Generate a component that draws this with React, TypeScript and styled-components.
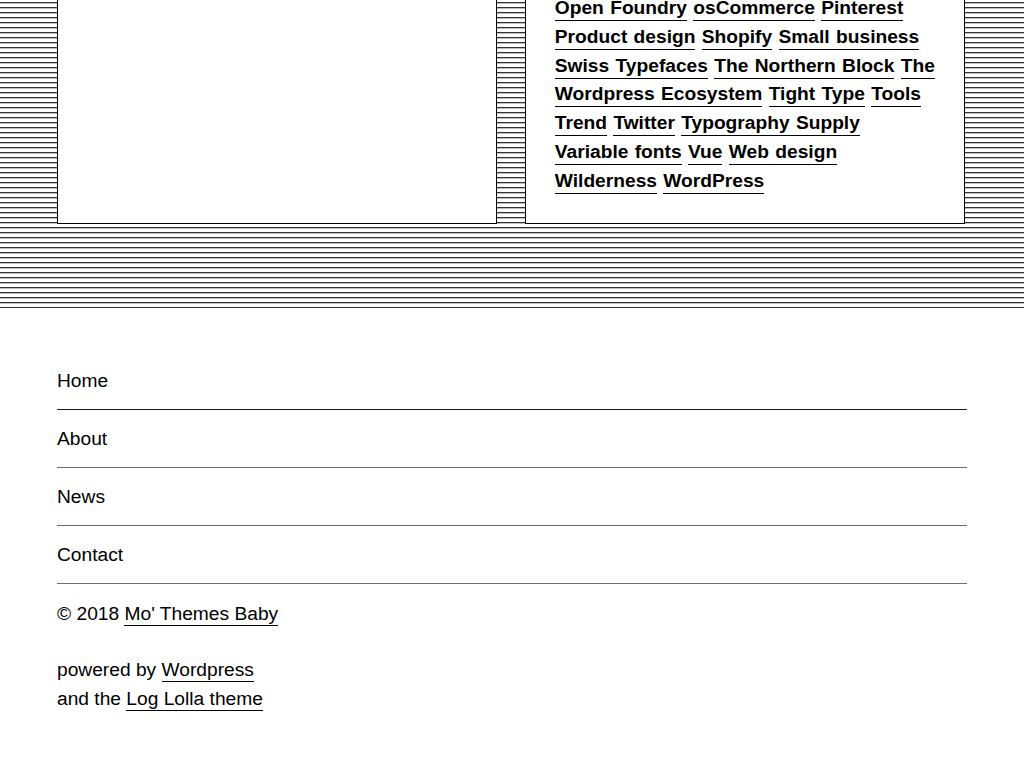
import React from "react";
import styled, { createGlobalStyle } from "styled-components";

const Global = createGlobalStyle`
  html, body { margin: 0; padding: 0; background: #fff; }
  body {
    font-family: "Liberation Sans", Arial, Helvetica, sans-serif;
    font-size: 19.2px;
    line-height: 1.5;
    color: #000;
  }
  * { box-sizing: border-box; }
`;

const Striped = styled.section`
  background: repeating-linear-gradient(
    to bottom,
    #fff 0px,
    #fff 2px,
    #333 2px,
    #333 3px,
    #bcbcbc 3px,
    #bcbcbc 4px,
    #fff 4px,
    #fff 5px
  );
  padding-bottom: 84px;
`;

const Grid = styled.div`
  width: 910px;
  margin: 0 auto;
  display: grid;
  grid-template-columns: 440px 440px;
  column-gap: 28px;
`;

const Card = styled.div`
  background: #fff;
  border: 1px solid #000;
  border-top: none;
  padding: 0 28.8px 27px;
  min-height: 100px;
`;

const TagCloud = styled.div`
  margin-top: -6px;
  font-weight: 700;
  word-spacing: 1px;
`;

const Tag = styled.a`
  color: #000;
  text-decoration: none;
  padding-bottom: 2px;
  border-bottom: 1px solid #000;
`;

const Footer = styled.footer`
  width: 910px;
  margin: 0 auto;
  padding: 45px 0 40px;
`;

const NavList = styled.ul`
  list-style: none;
  margin: 0;
  padding: 0;
`;

const NavItem = styled.li<{ $first?: boolean }>`
  padding: 14.6px 0 13.4px;
  border-bottom: 1px solid ${(p) => (p.$first ? "#1a1a1a" : "#6e6e6e")};
`;

const NavLink = styled.a`
  color: #000;
  text-decoration: none;
`;

const Line = styled.p<{ $top?: number }>`
  margin: ${(p) => p.$top ?? 0}px 0 0;
`;

const FootLink = styled.a`
  color: #000;
  text-decoration: none;
  padding-bottom: 1px;
  border-bottom: 1px solid #000;
`;

const tags = [
  "Open Foundry",
  "osCommerce",
  "Pinterest",
  "Product design",
  "Shopify",
  "Small business",
  "Swiss Typefaces",
  "The Northern Block",
  "The Wordpress Ecosystem",
  "Tight Type",
  "Tools",
  "Trend",
  "Twitter",
  "Typography Supply",
  "Variable fonts",
  "Vue",
  "Web design",
  "Wilderness",
  "WordPress",
];

const nav = ["Home", "About", "News", "Contact"];

export default function App() {
  return (
    <>
      <Global />
      <Striped>
        <Grid>
          <Card />
          <Card>
            <TagCloud>
              {tags.map((t, i) => (
                <React.Fragment key={t}>
                  <Tag href="#">{t}</Tag>
                  {i < tags.length - 1 ? " " : ""}
                </React.Fragment>
              ))}
            </TagCloud>
          </Card>
        </Grid>
      </Striped>
      <Footer>
        <NavList>
          {nav.map((n, i) => (
            <NavItem key={n} $first={i === 0}>
              <NavLink href="#">{n}</NavLink>
            </NavItem>
          ))}
        </NavList>
        <Line $top={16.4}>
          © 2018 <FootLink href="#">Mo' Themes Baby</FootLink>
        </Line>
        <Line $top={27}>
          powered by <FootLink href="#">Wordpress</FootLink>
          <br />
          and the <FootLink href="#">Log Lolla theme</FootLink>
        </Line>
      </Footer>
    </>
  );
}
